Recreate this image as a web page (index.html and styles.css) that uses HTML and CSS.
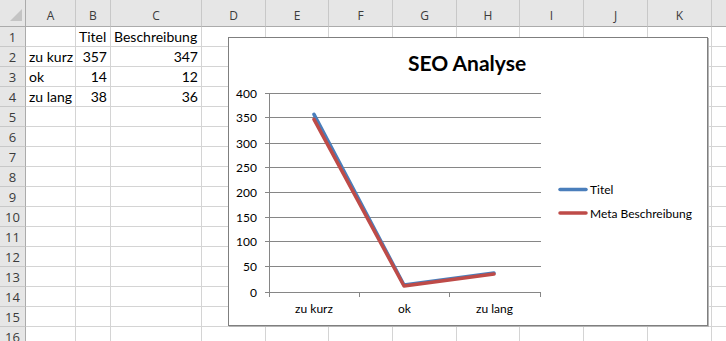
FILE: index.html
```html
<!DOCTYPE html>
<html lang="de">
<head>
  <meta charset="UTF-8" />
  <meta name="viewport" content="width=device-width, initial-scale=1.0"/>
  <title>SEO Analyse</title>
  <link rel="stylesheet" href="styles.css">
</head>
<body>

  <div class="sheet">
    <div class="grid" id="grid">
      <!-- cells are added by the script below -->
    </div>

    <div class="chart">
      <svg class="chart-svg" width="478" height="287" viewBox="229 38 478 287">
        <text class="chart-title" x="467" y="71" text-anchor="middle">SEO Analyse</text>

        <g class="gridlines">
          <line x1="269" y1="93.5" x2="541" y2="93.5" />
          <line x1="269" y1="117.5" x2="541" y2="117.5" />
          <line x1="269" y1="143.5" x2="541" y2="143.5" />
          <line x1="269" y1="167.5" x2="541" y2="167.5" />
          <line x1="269" y1="192.5" x2="541" y2="192.5" />
          <line x1="269" y1="217.5" x2="541" y2="217.5" />
          <line x1="269" y1="241.5" x2="541" y2="241.5" />
          <line x1="269" y1="266.5" x2="541" y2="266.5" />
        </g>

        <g class="axis">
          <line x1="269.5" y1="93" x2="269.5" y2="297" />
          <line x1="265" y1="292.5" x2="541" y2="292.5" />
          <line x1="265" y1="93.5" x2="269" y2="93.5" />
          <line x1="265" y1="117.5" x2="269" y2="117.5" />
          <line x1="265" y1="143.5" x2="269" y2="143.5" />
          <line x1="265" y1="167.5" x2="269" y2="167.5" />
          <line x1="265" y1="192.5" x2="269" y2="192.5" />
          <line x1="265" y1="217.5" x2="269" y2="217.5" />
          <line x1="265" y1="241.5" x2="269" y2="241.5" />
          <line x1="265" y1="266.5" x2="269" y2="266.5" />
          <line x1="359.5" y1="292" x2="359.5" y2="297" />
          <line x1="449.5" y1="292" x2="449.5" y2="297" />
          <line x1="540.5" y1="292" x2="540.5" y2="297" />
        </g>

        <g class="axis-label" text-anchor="end">
          <text x="257" y="97.5">400</text>
          <text x="257" y="121.5">350</text>
          <text x="257" y="147.5">300</text>
          <text x="257" y="171.5">250</text>
          <text x="257" y="196.5">200</text>
          <text x="257" y="221.5">150</text>
          <text x="257" y="245.5">100</text>
          <text x="257" y="270.5">50</text>
          <text x="257" y="296.5">0</text>
        </g>

        <g class="axis-label" text-anchor="middle">
          <text x="314" y="313">zu kurz</text>
          <text x="404.5" y="313">ok</text>
          <text x="494.5" y="313">zu lang</text>
        </g>

        <polyline class="series titel" points="314,114.4 404,285 494,273.1" />
        <polyline class="series beschreibung" points="314,119.4 404,286 494,274.1" />

        <line class="series titel" x1="560" y1="189.5" x2="586" y2="189.5" />
        <text class="legend-label" x="590" y="194">Titel</text>
        <line class="series beschreibung" x1="560" y1="213" x2="586" y2="213" />
        <text class="legend-label" x="590" y="217.5">Meta Beschreibung</text>
      </svg>
    </div>
  </div>

  <script>
    const grid = document.getElementById('grid');

    // L is only partly on screen, so its letter is not shown
    const columns = ['A', 'B', 'C', 'D', 'E', 'F', 'G', 'H', 'I', 'J', 'K', ''];
    const rowCount = 16;

    const data = {
      1: ['', 'Titel', 'Beschreibung'],
      2: ['zu kurz', 357, 347],
      3: ['ok', 14, 12],
      4: ['zu lang', 38, 36]
    };

    function addCell(className, text) {
      const cell = document.createElement('div');
      cell.className = className;
      if (text !== undefined && text !== '') {
        const span = document.createElement('span');
        span.textContent = text;
        cell.appendChild(span);
      }
      grid.appendChild(cell);
    }

    // header row
    const corner = document.createElement('div');
    corner.className = 'corner';
    corner.innerHTML = '<svg width="26" height="27"><polygon points="22,10 22,22 10,22" /></svg>';
    grid.appendChild(corner);
    columns.forEach(col => addCell('col-head', col));

    // body rows
    for (let r = 1; r <= rowCount; r++) {
      addCell('row-head', r);
      const values = data[r] || [];
      columns.forEach((col, i) => {
        const value = values[i];
        const isNumber = typeof value === 'number';
        addCell(isNumber ? 'cell num' : 'cell', value);
      });
    }
  </script>

</body>
</html>
```

FILE: styles.css
```css
html, body {
  margin: 0;
  padding: 0;
  background: #ffffff;
}

.sheet {
  position: relative;
  width: 726px;
  height: 341px;
  overflow: hidden;
}

.grid {
  display: grid;
  grid-template-columns: 26px 50px 35px 91px 64px 63px 64px 64px 63px 64px 64px 64px 64px;
  grid-template-rows: 27px repeat(16, 20px);
  font-family: Lato, "Open Sans", sans-serif;
}

.grid > div {
  box-sizing: border-box;
  display: flex;
  align-items: flex-end;
  line-height: 16px;
  white-space: nowrap;
  overflow: visible;
}

.corner,
.col-head,
.row-head {
  background-color: #e6e6e6;
  color: #3b3b3b;
  font-family: "Open Sans", sans-serif;
  justify-content: center;
}

.corner {
  border-right: 1px solid #ababab;
  border-bottom: 1px solid #ababab;
}

.corner svg {
  display: block;
  margin: -1px 0 0 0;
}

.corner polygon {
  fill: #c4c4c4;
}

.col-head {
  font-size: 12px;
  padding-bottom: 2px;
  border-right: 1px solid #c8c8c8;
  border-bottom: 1px solid #ababab;
}

.row-head {
  font-size: 13px;
  padding-bottom: 1px;
  border-right: 1px solid #ababab;
  border-bottom: 1px solid #c8c8c8;
}

.cell {
  font-size: 14px;
  color: #000;
  padding: 0 3px 1px 3px;
  border-right: 1px solid #d4d4d4;
  border-bottom: 1px solid #d4d4d4;
}

.cell.num {
  justify-content: flex-end;
}

.chart {
  position: absolute;
  left: 228px;
  top: 37px;
  width: 480px;
  height: 289px;
  box-sizing: border-box;
  background: #ffffff;
  border: 1px solid #7f7f7f;
  box-shadow: 1px 1px 0 #b5b5b5;
}

.chart-svg {
  display: block;
  font-family: Lato, "Open Sans", sans-serif;
}

.chart-title {
  font-size: 21px;
  font-weight: bold;
  fill: #000;
}

.gridlines line,
.axis line {
  stroke: #868686;
  stroke-width: 1;
}

.axis-label {
  font-size: 12px;
  fill: #000;
}

.legend-label {
  font-size: 12px;
  fill: #000;
}

.series {
  fill: none;
  stroke-width: 3.5;
  stroke-linejoin: round;
  stroke-linecap: round;
}

.series.titel {
  stroke: #4a7ebb;
}

.series.beschreibung {
  stroke: #be4b48;
}
```
